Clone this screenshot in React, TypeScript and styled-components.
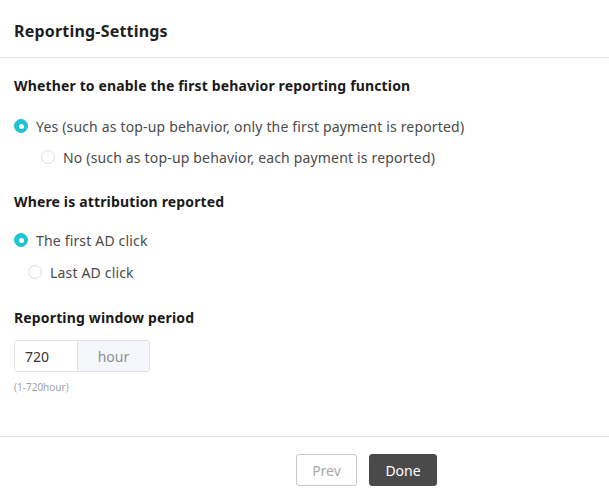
import React, { useState } from "react";
import styled, { createGlobalStyle } from "styled-components";

const Global = createGlobalStyle`
  html, body { margin: 0; padding: 0; background: #fff; }
  body { font-family: "Noto Sans", "Open Sans", sans-serif; color: #1f2329; }
  * { box-sizing: border-box; }
`;

const Dialog = styled.div`
  width: 609px;
  height: 499px;
  display: flex;
  flex-direction: column;
  background: #fff;
`;

const Header = styled.div`
  height: 58px;
  padding: 4px 14px 0;
  display: flex;
  align-items: center;
  border-bottom: 1px solid #e3e4e8;
  font-size: 16px;
  font-weight: 700;
  letter-spacing: 0.2px;
  color: #1f1f1f;
`;

const Body = styled.div`
  flex: 1;
  padding: 17px 14px 0;
  display: flex;
  flex-direction: column;
  border-bottom: 1px solid #e3e4e8;
`;

const SectionTitle = styled.div<{ $mt?: number }>`
  font-size: 14px;
  font-weight: 700;
  letter-spacing: 0.15px;
  color: #1a1a1a;
  line-height: 22px;
  margin-top: ${(p) => p.$mt ?? 0}px;
`;

const RadioRow = styled.label<{ $indent?: number; $mt?: number }>`
  display: flex;
  align-items: center;
  gap: 8px;
  height: 22px;
  margin-top: ${(p) => p.$mt ?? 0}px;
  padding-left: ${(p) => p.$indent ?? 0}px;
  font-size: 14px;
  letter-spacing: 0.17px;
  color: #4a4a4a;
  cursor: pointer;
`;

const RadioDot = styled.span<{ $checked: boolean }>`
  width: 14px;
  height: 14px;
  border-radius: 50%;
  flex: none;
  position: relative;
  background: ${(p) => (p.$checked ? "#1ec4d4" : "#fff")};
  border: 1px solid ${(p) => (p.$checked ? "#1ec4d4" : "#dcdde2")};
  &::after {
    content: "";
    display: ${(p) => (p.$checked ? "block" : "none")};
    position: absolute;
    left: 50%;
    top: 50%;
    width: 5px;
    height: 5px;
    margin: -2.5px 0 0 -2.5px;
    border-radius: 50%;
    background: #fff;
  }
`;

const InputGroup = styled.div`
  display: flex;
  width: 136px;
  height: 32px;
  margin-top: 11px;
  border: 1px solid #e1e3e8;
  border-radius: 3px;
  overflow: hidden;
`;

const NumInput = styled.input`
  width: 63px;
  border: none;
  border-right: 1px solid #e1e3e8;
  padding: 0 10px;
  font-family: inherit;
  font-size: 14px;
  color: #333;
  outline: none;
`;

const Addon = styled.div`
  flex: 1;
  display: flex;
  align-items: center;
  justify-content: center;
  background: #f5f6fa;
  color: #8a8f99;
  font-size: 14px;
`;

const Hint = styled.div`
  margin-top: 8px;
  font-size: 10px;
  color: #a0a3a8;
`;

const Footer = styled.div`
  height: 62px;
  display: flex;
  align-items: flex-start;
  padding: 17px 0 0 296px;
  gap: 12px;
`;

const Button = styled.button<{ $primary?: boolean }>`
  height: 32px;
  padding: 0;
  width: ${(p) => (p.$primary ? 68 : 61)}px;
  border-radius: 3px;
  font-family: inherit;
  font-size: 14px;
  cursor: pointer;
  border: 1px solid ${(p) => (p.$primary ? "#4a4a4a" : "#c8c8c8")};
  background: ${(p) => (p.$primary ? "#4a4a4a" : "#fff")};
  color: ${(p) => (p.$primary ? "#fff" : "#a8a8a8")};
`;

type Opt = { label: string; indent: number };

function RadioGroup({ options, firstGap, gap }: { options: Opt[]; firstGap: number; gap: number }) {
  const [sel, setSel] = useState(0);
  return (
    <>
      {options.map((o, i) => (
        <RadioRow key={i} $indent={o.indent} $mt={i === 0 ? firstGap : gap} onClick={() => setSel(i)}>
          <RadioDot $checked={sel === i} />
          {o.label}
        </RadioRow>
      ))}
    </>
  );
}

export default function App() {
  return (
    <Dialog>
      <Global />
      <Header>Reporting-Settings</Header>
      <Body>
        <SectionTitle>Whether to enable the first behavior reporting function</SectionTitle>
        <RadioGroup
          firstGap={18}
          gap={9}
          options={[
            { label: "Yes (such as top-up behavior, only the first payment is reported)", indent: 0 },
            { label: "No (such as top-up behavior, each payment is reported)", indent: 27 },
          ]}
        />
        <SectionTitle $mt={23}>Where is attribution reported</SectionTitle>
        <RadioGroup
          firstGap={16}
          gap={10}
          options={[
            { label: "The first AD click", indent: 0 },
            { label: "Last AD click", indent: 14 },
          ]}
        />
        <SectionTitle $mt={24}>Reporting window period</SectionTitle>
        <InputGroup>
          <NumInput defaultValue="720" />
          <Addon>hour</Addon>
        </InputGroup>
        <Hint>(1-720hour)</Hint>
      </Body>
      <Footer>
        <Button>Prev</Button>
        <Button $primary>Done</Button>
      </Footer>
    </Dialog>
  );
}
